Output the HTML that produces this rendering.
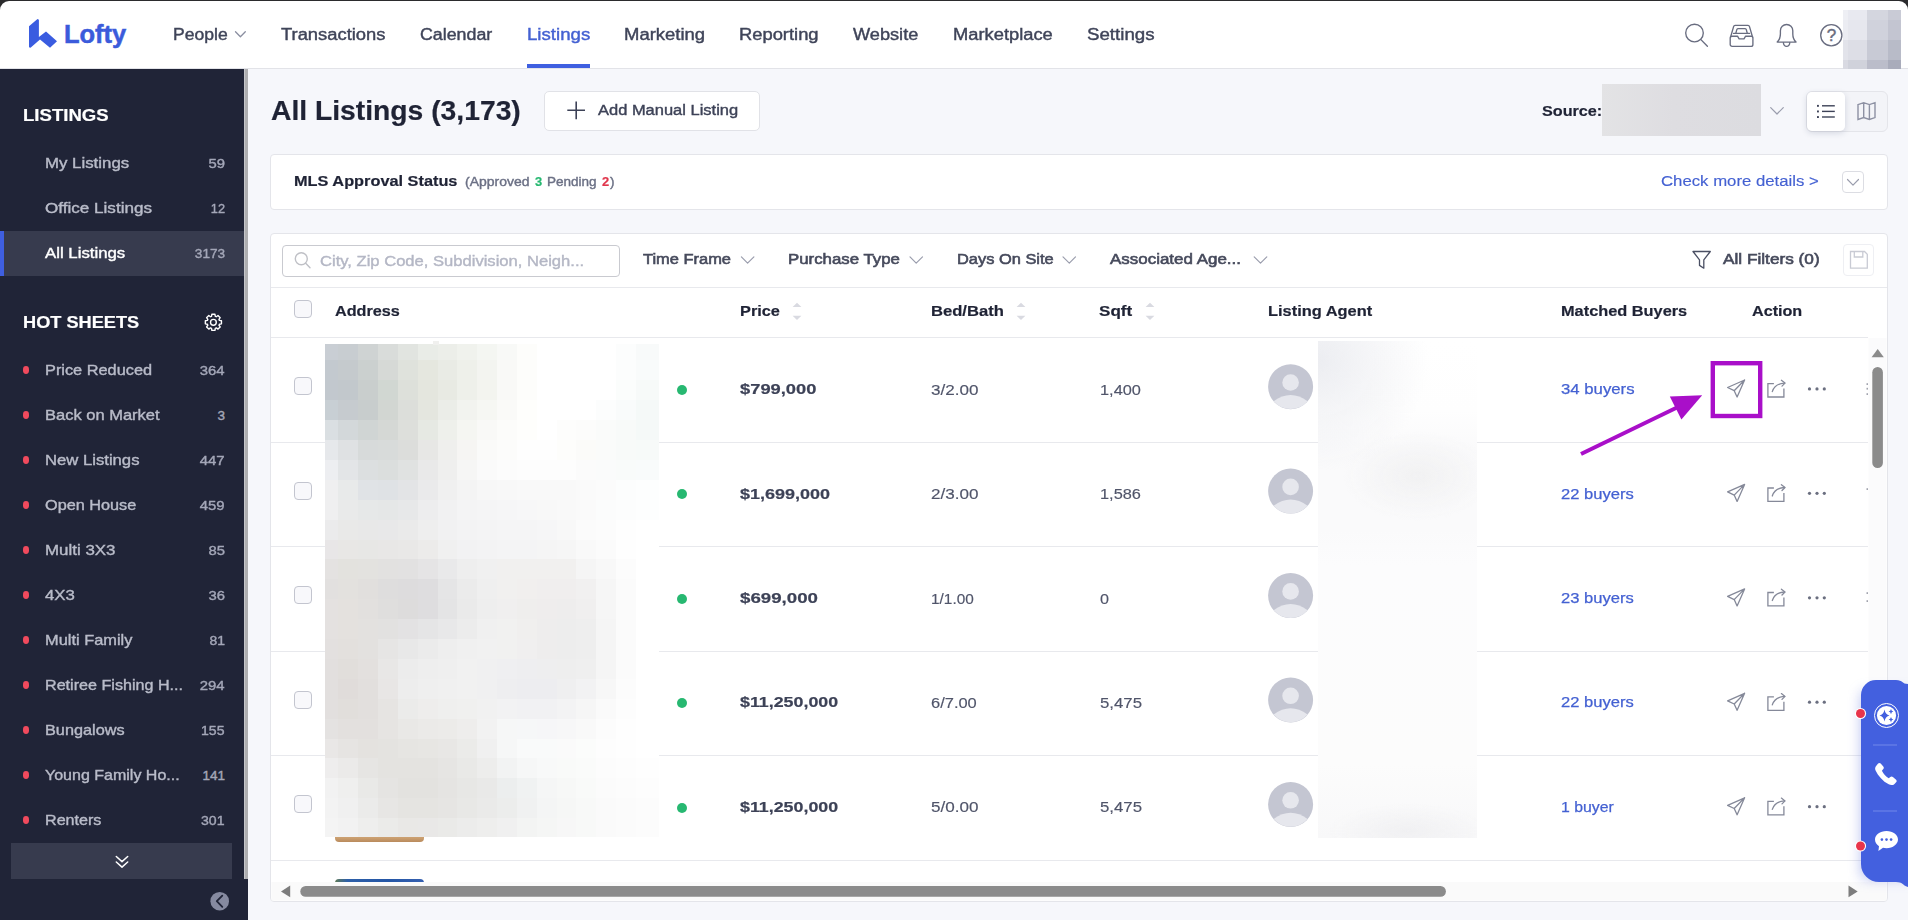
<!DOCTYPE html>
<html lang="en"><head><meta charset="utf-8"><title>Lofty - All Listings</title>
<style>
*{box-sizing:border-box}
html,body{margin:0;padding:0}
body{width:1908px;height:920px;overflow:hidden;position:relative;background:#f6f7fb;font-family:"Liberation Sans",sans-serif}
.a{position:absolute}
.t{position:absolute;white-space:pre;line-height:24px;height:24px;transform-origin:0 50%}
svg{position:absolute;overflow:visible}
.cb{position:absolute;width:18px;height:18px;border:1px solid #c3c5cf;border-radius:4px;background:#f8f8fb;left:294px}
.hl{position:absolute;left:271px;width:1597px;height:1px;background:#e8e9ed}
.dot{position:absolute;width:6.5px;height:7.5px;border-radius:50%;background:#f04a5d;left:22.8px}
.gd{position:absolute;width:10px;height:10px;border-radius:50%;background:#27b871;left:677px}
</style></head><body>
<!-- window frame -->
<div class="a" style="left:0;top:0;width:1908px;height:12px;background:#2b2b2d"></div>
<div class="a" style="left:0;top:1px;width:1908px;height:68px;background:#fff;border-radius:9px 9px 0 0;border-bottom:1px solid #e2e3e8"></div>
<!-- sidebar -->
<div class="a" style="left:0;top:69px;width:248px;height:851px;background:#202437"></div>
<div class="a" style="left:244px;top:69px;width:4px;height:810px;background:#aeaeb0;border-left:1px solid #c4c5c9"></div>
<div class="a" style="left:0;top:231px;width:244px;height:45px;background:#373b4e;border-left:4.5px solid #3f5fe0"></div>
<div class="a" style="left:11px;top:843px;width:221px;height:36px;background:#373b4e"></div>
<div class="dot" style="top:366px"></div>
<div class="dot" style="top:411px"></div>
<div class="dot" style="top:456px"></div>
<div class="dot" style="top:501px"></div>
<div class="dot" style="top:546px"></div>
<div class="dot" style="top:591px"></div>
<div class="dot" style="top:636px"></div>
<div class="dot" style="top:681px"></div>
<div class="dot" style="top:726px"></div>
<div class="dot" style="top:771px"></div>
<div class="dot" style="top:816px"></div>
<svg style="left:0;top:0" width="250" height="920" fill="none" stroke-linecap="round" stroke-linejoin="round">
<polygon points="219.41,320.41 221.45,320.75 221.45,323.85 219.41,324.19 218.98,325.22 220.19,326.90 218.00,329.09 216.32,327.88 215.29,328.31 214.95,330.35 211.85,330.35 211.51,328.31 210.48,327.88 208.80,329.09 206.61,326.90 207.82,325.22 207.39,324.19 205.35,323.85 205.35,320.75 207.39,320.41 207.82,319.38 206.61,317.70 208.80,315.51 210.48,316.72 211.51,316.29 211.85,314.25 214.95,314.25 215.29,316.29 216.32,316.72 218.00,315.51 220.19,317.70 218.98,319.38" stroke="#fff" stroke-width="1.4"/>
<circle cx="213.4" cy="322.3" r="2.9" stroke="#fff" stroke-width="1.4"/>
<polyline points="116.3,856.5 122,861.6 127.7,856.5" stroke="#fff" stroke-width="1.5"/>
<polyline points="116.3,862 122,867.1 127.7,862" stroke="#fff" stroke-width="1.5"/>
<circle cx="219.7" cy="901.2" r="9.3" fill="#868aa0"/>
<polyline points="222.3,895.6 216.8,901.2 222.3,906.8" stroke="#202437" stroke-width="1.8"/>
</svg>
<!-- logo -->
<svg style="left:0;top:0" width="70" height="60"><polygon fill="#3a5ce0" points="37.5,19 38.9,19.8 38.9,37 46,31.5 57,41.25 50,47.75 40,39.5 30.5,47.75 29,47.3 29,26.25"/></svg>
<!-- nav underline -->
<div class="a" style="left:526.5px;top:64px;width:63.5px;height:4px;background:#3f5fe0"></div>
<svg style="left:0;top:0" width="1908" height="70" fill="none" stroke="#696d80" stroke-width="1.35" stroke-linecap="round" stroke-linejoin="round">
<polyline points="235.5,31.8 240.4,36.7 245.3,31.8" stroke="#8a8ea0" stroke-width="1.3"/>
<circle cx="1694.5" cy="33" r="8.8"/><line x1="1700.9" y1="39.6" x2="1707.4" y2="46.3"/>
<path d="M1731.7,36.2h5.8l1.6,2.6h4.9l1.6,-2.6h5.8a1.5,1.5 0 0 1 1.5,1.5v6.8a1.9,1.9 0 0 1 -1.9,1.9h-18.9a1.9,1.9 0 0 1 -1.9,-1.9v-6.8a1.5,1.5 0 0 1 1.5,-1.5z"/>
<path d="M1730.6,37 L1733.6,26.6 a1.6,1.6 0 0 1 1.5,-1.2 h12.9 a1.6,1.6 0 0 1 1.5,1.2 L1752.5,37"/>
<path d="M1735.8,33.4 L1736.8,29.6 a1.3,1.3 0 0 1 1.2,-1 h7.1 a1.3,1.3 0 0 1 1.2,1 L1747.3,33.4"/>
<line x1="1733.6" y1="33.4" x2="1749.5" y2="33.4"/>
<path d="M1777.2,42.1 c2.4,-2.4 3.2,-4.6 3.2,-8.2 v-3.2 a6.2,6.2 0 0 1 12.4,0 v3.2 c0,3.6 0.8,5.8 3.2,8.2 z"/>
<path d="M1783.4,42.6 a3.2,3.8 0 0 0 6.4,0"/>
<circle cx="1831.3" cy="35.2" r="10.6"/>
</svg>
<span class="t" style="left:1826.5px;top:23.6px;font-size:17px;color:#696d80;width:10px;text-align:center;-webkit-text-stroke:.45px #696d80">?</span>
<div class="a" style="left:1843px;top:10px;width:5px;height:10px;background:#eeeff4"></div>
<div class="a" style="left:1843px;top:20px;width:5px;height:20px;background:#ebecf2"></div>
<div class="a" style="left:1843px;top:40px;width:5px;height:19.5px;background:#e2e3ea"></div>
<div class="a" style="left:1843px;top:59.5px;width:5px;height:9.799999999999997px;background:#d9dae2"></div>
<div class="a" style="left:1848px;top:10px;width:19px;height:10px;background:#e8e9f0"></div>
<div class="a" style="left:1848px;top:20px;width:19px;height:20px;background:#e6e7ee"></div>
<div class="a" style="left:1848px;top:40px;width:19px;height:19.5px;background:#dddee6"></div>
<div class="a" style="left:1848px;top:59.5px;width:19px;height:9.799999999999997px;background:#d0d2db"></div>
<div class="a" style="left:1867px;top:10px;width:21px;height:10px;background:#d4d6df"></div>
<div class="a" style="left:1867px;top:20px;width:21px;height:20px;background:#d0d2dc"></div>
<div class="a" style="left:1867px;top:40px;width:21px;height:19.5px;background:#c8cad5"></div>
<div class="a" style="left:1867px;top:59.5px;width:21px;height:9.799999999999997px;background:#bbbdca"></div>
<div class="a" style="left:1888px;top:10px;width:13px;height:10px;background:#c9cbd6"></div>
<div class="a" style="left:1888px;top:20px;width:13px;height:20px;background:#c3c5d1"></div>
<div class="a" style="left:1888px;top:40px;width:13px;height:19.5px;background:#b8bbc8"></div>
<div class="a" style="left:1888px;top:59.5px;width:13px;height:9.799999999999997px;background:#a9acbb"></div>
<!-- main -->
<div class="a" style="left:544.3px;top:91.2px;width:216.2px;height:40.3px;background:#fff;border:1px solid #e1e2e7;border-radius:5px"></div>
<div class="a" style="left:1601.5px;top:84px;width:159.5px;height:52px;background:linear-gradient(90deg,#e3e3e5,#dedde1 45%,#dcdce0)"></div>
<div class="a" style="left:1806px;top:91px;width:82px;height:40.5px;border:1px solid #e4e5ea;border-radius:6px;background:#f3f4f8"></div>
<div class="a" style="left:1807px;top:92px;width:38px;height:38.5px;border-radius:5px;background:#fff;box-shadow:0 2px 6px rgba(40,50,90,.16)"></div>
<!-- MLS panel -->
<div class="a" style="left:270px;top:154px;width:1617.5px;height:55.5px;background:#fff;border:1px solid #e4e5ea;border-radius:4px"></div>
<div class="a" style="left:1842px;top:171px;width:22px;height:22px;border:1px solid #dcdde3;border-radius:4px;background:#fff"></div>
<!-- table panel -->
<div class="a" style="left:270px;top:233px;width:1617.5px;height:668.5px;background:#fff;border:1px solid #e4e5ea;border-radius:4px"></div>
<div class="a" style="left:282px;top:245px;width:338px;height:31.5px;border:1px solid #c9cad0;border-radius:4px;background:#fff"></div>
<div class="a" style="left:1843px;top:244px;width:31px;height:31.5px;border:1px solid #eeeff3;border-radius:4px;background:#fff"></div>
<div class="hl" style="top:287px;width:1616px"></div>
<div class="hl" style="top:337px"></div>
<div class="hl" style="top:442px"></div>
<div class="hl" style="top:546px"></div>
<div class="hl" style="top:651px"></div>
<div class="hl" style="top:755px"></div>
<div class="hl" style="top:860px"></div>
<!-- checkboxes -->
<div class="cb" style="top:300px"></div>
<div class="cb" style="top:377px"></div>
<div class="cb" style="top:481.5px"></div>
<div class="cb" style="top:586px"></div>
<div class="cb" style="top:690.5px"></div>
<div class="cb" style="top:794.5px"></div>
<!-- green dots -->
<div class="gd" style="top:384.5px"></div>
<div class="gd" style="top:489px"></div>
<div class="gd" style="top:593.5px"></div>
<div class="gd" style="top:698px"></div>
<div class="gd" style="top:802.5px"></div>
<div class="a" style="left:334.5px;top:830px;width:89px;height:11.6px;border-radius:0 0 4px 4px;background:linear-gradient(180deg,#d9b58d,#c99d6e 70%,#b98a5c)"></div>
<div class="a" style="left:334.5px;top:879px;width:89px;height:6px;border-radius:4px 4px 0 0;background:linear-gradient(90deg,#5f7a55 0,#2d5fa8 14%,#2456a6 60%,#3560b0)"></div>
<svg style="left:0;top:0" width="1908" height="920" shape-rendering="crispEdges">
<rect x="325.3" y="344.0" width="13.2" height="16.7" fill="#c9ced4"/>
<rect x="338.2" y="344.0" width="20.2" height="16.7" fill="#c8cdd1"/>
<rect x="358.1" y="344.0" width="20.2" height="16.7" fill="#cfd3d3"/>
<rect x="377.9" y="344.0" width="20.2" height="16.7" fill="#d9dcda"/>
<rect x="397.8" y="344.0" width="20.2" height="16.7" fill="#e1e4e0"/>
<rect x="417.6" y="344.0" width="20.2" height="16.7" fill="#e9ece7"/>
<rect x="437.5" y="344.0" width="20.2" height="16.7" fill="#eceee9"/>
<rect x="457.3" y="344.0" width="20.2" height="16.7" fill="#f0f2ed"/>
<rect x="477.2" y="344.0" width="20.2" height="16.7" fill="#f4f6f2"/>
<rect x="497.0" y="344.0" width="20.1" height="16.7" fill="#f8f9f7"/>
<rect x="516.9" y="344.0" width="20.2" height="16.7" fill="#fdfdfb"/>
<rect x="536.7" y="344.0" width="79.7" height="16.7" fill="#ffffff"/>
<rect x="616.1" y="344.0" width="20.2" height="16.7" fill="#fcfdfd"/>
<rect x="636.0" y="344.0" width="23.4" height="16.7" fill="#f8fafa"/>
<rect x="325.3" y="360.4" width="13.2" height="20.2" fill="#c3c9cf"/>
<rect x="338.2" y="360.4" width="20.2" height="20.2" fill="#c5cacd"/>
<rect x="358.1" y="360.4" width="20.2" height="20.2" fill="#cbd0cf"/>
<rect x="377.9" y="360.4" width="20.2" height="20.2" fill="#d6d9d6"/>
<rect x="397.8" y="360.4" width="20.2" height="20.2" fill="#dfe2dc"/>
<rect x="417.6" y="360.4" width="20.2" height="20.2" fill="#e5e7df"/>
<rect x="437.5" y="360.4" width="20.2" height="20.2" fill="#e9ebe5"/>
<rect x="457.3" y="360.4" width="20.2" height="20.2" fill="#eef0ea"/>
<rect x="477.2" y="360.4" width="20.2" height="20.2" fill="#f3f4f0"/>
<rect x="497.0" y="360.4" width="20.1" height="20.2" fill="#f9f9f7"/>
<rect x="516.9" y="360.4" width="20.2" height="20.2" fill="#fdfdfb"/>
<rect x="536.7" y="360.4" width="79.7" height="20.2" fill="#ffffff"/>
<rect x="616.1" y="360.4" width="20.2" height="20.2" fill="#fcfdfd"/>
<rect x="636.0" y="360.4" width="23.4" height="20.2" fill="#f9fbfb"/>
<rect x="325.3" y="380.3" width="13.2" height="20.2" fill="#c2c8ce"/>
<rect x="338.2" y="380.3" width="20.2" height="20.2" fill="#c2c8cc"/>
<rect x="358.1" y="380.3" width="20.2" height="20.2" fill="#c9cecd"/>
<rect x="377.9" y="380.3" width="20.2" height="20.2" fill="#d1d7d2"/>
<rect x="397.8" y="380.3" width="20.2" height="20.2" fill="#dde0da"/>
<rect x="417.6" y="380.3" width="20.2" height="20.2" fill="#e4e6de"/>
<rect x="437.5" y="380.3" width="20.2" height="20.2" fill="#e8eae3"/>
<rect x="457.3" y="380.3" width="20.2" height="20.2" fill="#eef0ea"/>
<rect x="477.2" y="380.3" width="20.2" height="20.2" fill="#f3f4ef"/>
<rect x="497.0" y="380.3" width="20.1" height="20.2" fill="#f9f9f7"/>
<rect x="516.9" y="380.3" width="20.2" height="20.2" fill="#fdfdfb"/>
<rect x="536.7" y="380.3" width="79.7" height="20.2" fill="#ffffff"/>
<rect x="616.1" y="380.3" width="20.2" height="20.2" fill="#fbfdfc"/>
<rect x="636.0" y="380.3" width="23.4" height="20.2" fill="#f7faf9"/>
<rect x="325.3" y="400.2" width="13.2" height="20.2" fill="#c8cfd4"/>
<rect x="338.2" y="400.2" width="20.2" height="20.2" fill="#c6cbcf"/>
<rect x="358.1" y="400.2" width="20.2" height="20.2" fill="#c8cdcd"/>
<rect x="377.9" y="400.2" width="20.2" height="20.2" fill="#d2d6d2"/>
<rect x="397.8" y="400.2" width="20.2" height="20.2" fill="#dcdeda"/>
<rect x="417.6" y="400.2" width="20.2" height="20.2" fill="#e4e6df"/>
<rect x="437.5" y="400.2" width="20.2" height="20.2" fill="#ebede8"/>
<rect x="457.3" y="400.2" width="20.2" height="20.2" fill="#f2f3ef"/>
<rect x="477.2" y="400.2" width="20.2" height="20.2" fill="#f6f7f3"/>
<rect x="497.0" y="400.2" width="20.1" height="20.2" fill="#fafaf8"/>
<rect x="516.9" y="400.2" width="20.2" height="20.2" fill="#fefefc"/>
<rect x="536.7" y="400.2" width="59.9" height="20.2" fill="#ffffff"/>
<rect x="596.3" y="400.2" width="20.2" height="20.2" fill="#fcfdfd"/>
<rect x="616.1" y="400.2" width="20.2" height="20.2" fill="#f9fbfb"/>
<rect x="636.0" y="400.2" width="23.4" height="20.2" fill="#f5f9f8"/>
<rect x="325.3" y="420.1" width="13.2" height="20.2" fill="#dadfe2"/>
<rect x="338.2" y="420.1" width="20.2" height="20.2" fill="#d3d8da"/>
<rect x="358.1" y="420.1" width="20.2" height="20.2" fill="#d0d5d4"/>
<rect x="377.9" y="420.1" width="20.2" height="20.2" fill="#d5d8d5"/>
<rect x="397.8" y="420.1" width="20.2" height="20.2" fill="#dddfdb"/>
<rect x="417.6" y="420.1" width="20.2" height="20.2" fill="#e6e9e3"/>
<rect x="437.5" y="420.1" width="20.2" height="20.2" fill="#eef0eb"/>
<rect x="457.3" y="420.1" width="20.2" height="20.2" fill="#f5f6f2"/>
<rect x="477.2" y="420.1" width="20.2" height="20.2" fill="#f9f9f7"/>
<rect x="497.0" y="420.1" width="20.1" height="20.2" fill="#fcfcfa"/>
<rect x="516.9" y="420.1" width="20.2" height="20.2" fill="#fefefc"/>
<rect x="536.7" y="420.1" width="20.2" height="20.2" fill="#ffffff"/>
<rect x="556.6" y="420.1" width="20.2" height="20.2" fill="#fdfdfc"/>
<rect x="576.4" y="420.1" width="20.2" height="20.2" fill="#fcfcfb"/>
<rect x="596.3" y="420.1" width="20.2" height="20.2" fill="#fafbfa"/>
<rect x="616.1" y="420.1" width="20.2" height="20.2" fill="#f8faf9"/>
<rect x="636.0" y="420.1" width="23.4" height="20.2" fill="#f5f9f8"/>
<rect x="325.3" y="440.0" width="13.2" height="20.2" fill="#e6e8eb"/>
<rect x="338.2" y="440.0" width="20.2" height="20.2" fill="#dfe1e3"/>
<rect x="358.1" y="440.0" width="20.2" height="20.2" fill="#d7dada"/>
<rect x="377.9" y="440.0" width="20.2" height="20.2" fill="#d8dbda"/>
<rect x="397.8" y="440.0" width="20.2" height="20.2" fill="#dcdddb"/>
<rect x="417.6" y="440.0" width="20.2" height="20.2" fill="#e7e7e5"/>
<rect x="437.5" y="440.0" width="20.2" height="20.2" fill="#efefed"/>
<rect x="457.3" y="440.0" width="20.2" height="20.2" fill="#f6f5f3"/>
<rect x="477.2" y="440.0" width="20.2" height="20.2" fill="#fafaf9"/>
<rect x="497.0" y="440.0" width="20.1" height="20.2" fill="#fcfcfb"/>
<rect x="516.9" y="440.0" width="40.0" height="20.2" fill="#fefefe"/>
<rect x="556.6" y="440.0" width="20.2" height="20.2" fill="#fdfdfb"/>
<rect x="576.4" y="440.0" width="20.2" height="20.2" fill="#fbfbf9"/>
<rect x="596.3" y="440.0" width="20.2" height="20.2" fill="#fafbfa"/>
<rect x="616.1" y="440.0" width="20.2" height="20.2" fill="#f8faf9"/>
<rect x="636.0" y="440.0" width="23.4" height="20.2" fill="#f7faf9"/>
<rect x="325.3" y="459.9" width="13.2" height="20.2" fill="#edeef1"/>
<rect x="338.2" y="459.9" width="20.2" height="20.2" fill="#e3e5e7"/>
<rect x="358.1" y="459.9" width="20.2" height="20.2" fill="#dcdfe0"/>
<rect x="377.9" y="459.9" width="20.2" height="20.2" fill="#dbdedd"/>
<rect x="397.8" y="459.9" width="20.2" height="20.2" fill="#e0e2e1"/>
<rect x="417.6" y="459.9" width="20.2" height="20.2" fill="#e9e9e9"/>
<rect x="437.5" y="459.9" width="20.2" height="20.2" fill="#efefee"/>
<rect x="457.3" y="459.9" width="20.2" height="20.2" fill="#f6f6f5"/>
<rect x="477.2" y="459.9" width="20.2" height="20.2" fill="#fafafa"/>
<rect x="497.0" y="459.9" width="20.1" height="20.2" fill="#fcfcfc"/>
<rect x="516.9" y="459.9" width="59.9" height="20.2" fill="#fdfdfd"/>
<rect x="576.4" y="459.9" width="20.2" height="20.2" fill="#fbfbfb"/>
<rect x="596.3" y="459.9" width="20.2" height="20.2" fill="#fafbfb"/>
<rect x="616.1" y="459.9" width="20.2" height="20.2" fill="#f9fbfa"/>
<rect x="636.0" y="459.9" width="23.4" height="20.2" fill="#f9fbfb"/>
<rect x="325.3" y="479.8" width="13.2" height="20.2" fill="#efeff0"/>
<rect x="338.2" y="479.8" width="20.2" height="20.2" fill="#e8eaea"/>
<rect x="358.1" y="479.8" width="20.2" height="20.2" fill="#e0e3e6"/>
<rect x="377.9" y="479.8" width="20.2" height="20.2" fill="#dfe2e5"/>
<rect x="397.8" y="479.8" width="20.2" height="20.2" fill="#e3e4e6"/>
<rect x="417.6" y="479.8" width="20.2" height="20.2" fill="#eaeaeb"/>
<rect x="437.5" y="479.8" width="20.2" height="20.2" fill="#f0f0f0"/>
<rect x="457.3" y="479.8" width="20.2" height="20.2" fill="#f4f4f4"/>
<rect x="477.2" y="479.8" width="20.2" height="20.2" fill="#f7f7f7"/>
<rect x="497.0" y="479.8" width="20.1" height="20.2" fill="#f8f8f8"/>
<rect x="516.9" y="479.8" width="59.9" height="20.2" fill="#f9f9f9"/>
<rect x="576.4" y="479.8" width="20.2" height="20.2" fill="#fafafa"/>
<rect x="596.3" y="479.8" width="20.2" height="20.2" fill="#fbfbfb"/>
<rect x="616.1" y="479.8" width="20.2" height="20.2" fill="#fcfdfd"/>
<rect x="636.0" y="479.8" width="23.4" height="20.2" fill="#fdfefe"/>
<rect x="325.3" y="499.7" width="13.2" height="20.2" fill="#efeff0"/>
<rect x="338.2" y="499.7" width="20.2" height="20.2" fill="#e9eaea"/>
<rect x="358.1" y="499.7" width="20.2" height="20.2" fill="#e6e8e8"/>
<rect x="377.9" y="499.7" width="20.2" height="20.2" fill="#e5e7e7"/>
<rect x="397.8" y="499.7" width="20.2" height="20.2" fill="#e7e8e9"/>
<rect x="417.6" y="499.7" width="20.2" height="20.2" fill="#ededee"/>
<rect x="437.5" y="499.7" width="20.2" height="20.2" fill="#f1f1f2"/>
<rect x="457.3" y="499.7" width="20.2" height="20.2" fill="#f4f4f5"/>
<rect x="477.2" y="499.7" width="20.2" height="20.2" fill="#f5f5f6"/>
<rect x="497.0" y="499.7" width="20.1" height="20.2" fill="#f6f6f7"/>
<rect x="516.9" y="499.7" width="20.2" height="20.2" fill="#f7f7f8"/>
<rect x="536.7" y="499.7" width="20.2" height="20.2" fill="#f8f8f8"/>
<rect x="556.6" y="499.7" width="20.2" height="20.2" fill="#f9f9f9"/>
<rect x="576.4" y="499.7" width="20.2" height="20.2" fill="#fafafa"/>
<rect x="596.3" y="499.7" width="20.2" height="20.2" fill="#fbfcfc"/>
<rect x="616.1" y="499.7" width="20.2" height="20.2" fill="#fcfdfd"/>
<rect x="636.0" y="499.7" width="23.4" height="20.2" fill="#fdfefe"/>
<rect x="325.3" y="519.6" width="13.2" height="20.2" fill="#ebebec"/>
<rect x="338.2" y="519.6" width="20.2" height="20.2" fill="#e9e9e8"/>
<rect x="358.1" y="519.6" width="20.2" height="20.2" fill="#e8e8e8"/>
<rect x="377.9" y="519.6" width="20.2" height="20.2" fill="#e8e8e9"/>
<rect x="397.8" y="519.6" width="20.2" height="20.2" fill="#eaeaea"/>
<rect x="417.6" y="519.6" width="20.2" height="20.2" fill="#eeeeee"/>
<rect x="437.5" y="519.6" width="20.2" height="20.2" fill="#f1f1f2"/>
<rect x="457.3" y="519.6" width="20.2" height="20.2" fill="#f3f3f4"/>
<rect x="477.2" y="519.6" width="20.2" height="20.2" fill="#f4f4f5"/>
<rect x="497.0" y="519.6" width="40.0" height="20.2" fill="#f5f5f6"/>
<rect x="536.7" y="519.6" width="20.2" height="20.2" fill="#f6f6f7"/>
<rect x="556.6" y="519.6" width="20.2" height="20.2" fill="#f8f8f8"/>
<rect x="576.4" y="519.6" width="20.2" height="20.2" fill="#fbfbfb"/>
<rect x="596.3" y="519.6" width="20.2" height="20.2" fill="#fcfcfc"/>
<rect x="616.1" y="519.6" width="20.2" height="20.2" fill="#fefefe"/>
<rect x="636.0" y="519.6" width="23.4" height="20.2" fill="#ffffff"/>
<rect x="325.3" y="539.5" width="13.2" height="20.2" fill="#e8e6e7"/>
<rect x="338.2" y="539.5" width="20.2" height="20.2" fill="#e8e7e5"/>
<rect x="358.1" y="539.5" width="20.2" height="20.2" fill="#e7e7e5"/>
<rect x="377.9" y="539.5" width="20.2" height="20.2" fill="#e8e7e6"/>
<rect x="397.8" y="539.5" width="20.2" height="20.2" fill="#e9e8e7"/>
<rect x="417.6" y="539.5" width="20.2" height="20.2" fill="#ecebea"/>
<rect x="437.5" y="539.5" width="20.2" height="20.2" fill="#f0f0f0"/>
<rect x="457.3" y="539.5" width="20.2" height="20.2" fill="#f2f2f3"/>
<rect x="477.2" y="539.5" width="20.2" height="20.2" fill="#f3f3f4"/>
<rect x="497.0" y="539.5" width="40.0" height="20.2" fill="#f4f4f5"/>
<rect x="536.7" y="539.5" width="20.2" height="20.2" fill="#f5f5f5"/>
<rect x="556.6" y="539.5" width="20.2" height="20.2" fill="#f6f6f6"/>
<rect x="576.4" y="539.5" width="20.2" height="20.2" fill="#f9f9f9"/>
<rect x="596.3" y="539.5" width="20.2" height="20.2" fill="#fbfbfb"/>
<rect x="616.1" y="539.5" width="20.2" height="20.2" fill="#fefefe"/>
<rect x="636.0" y="539.5" width="23.4" height="20.2" fill="#ffffff"/>
<rect x="325.3" y="559.4" width="13.2" height="20.2" fill="#e4e2e1"/>
<rect x="338.2" y="559.4" width="20.2" height="20.2" fill="#e3e2de"/>
<rect x="358.1" y="559.4" width="20.2" height="20.2" fill="#e3e2df"/>
<rect x="377.9" y="559.4" width="20.2" height="20.2" fill="#e2e1e0"/>
<rect x="397.8" y="559.4" width="20.2" height="20.2" fill="#e2e1e1"/>
<rect x="417.6" y="559.4" width="20.2" height="20.2" fill="#e5e4e5"/>
<rect x="437.5" y="559.4" width="20.2" height="20.2" fill="#e9e9ea"/>
<rect x="457.3" y="559.4" width="20.2" height="20.2" fill="#eeeeee"/>
<rect x="477.2" y="559.4" width="20.2" height="20.2" fill="#f0f0f0"/>
<rect x="497.0" y="559.4" width="79.7" height="20.2" fill="#f1f0ef"/>
<rect x="576.4" y="559.4" width="20.2" height="20.2" fill="#f5f5f5"/>
<rect x="596.3" y="559.4" width="20.2" height="20.2" fill="#f8f8f8"/>
<rect x="616.1" y="559.4" width="20.2" height="20.2" fill="#fcfcfc"/>
<rect x="636.0" y="559.4" width="23.4" height="20.2" fill="#ffffff"/>
<rect x="325.3" y="579.3" width="13.2" height="20.2" fill="#e2e0df"/>
<rect x="338.2" y="579.3" width="20.2" height="20.2" fill="#e3e1de"/>
<rect x="358.1" y="579.3" width="20.2" height="20.2" fill="#e1dfdd"/>
<rect x="377.9" y="579.3" width="20.2" height="20.2" fill="#dedddd"/>
<rect x="397.8" y="579.3" width="20.2" height="20.2" fill="#dddcdd"/>
<rect x="417.6" y="579.3" width="20.2" height="20.2" fill="#dedddf"/>
<rect x="437.5" y="579.3" width="20.2" height="20.2" fill="#e5e5e6"/>
<rect x="457.3" y="579.3" width="20.2" height="20.2" fill="#ebebeb"/>
<rect x="477.2" y="579.3" width="20.2" height="20.2" fill="#efefef"/>
<rect x="497.0" y="579.3" width="20.1" height="20.2" fill="#f1f0ef"/>
<rect x="516.9" y="579.3" width="20.2" height="20.2" fill="#f1efee"/>
<rect x="536.7" y="579.3" width="40.0" height="20.2" fill="#f0eeee"/>
<rect x="576.4" y="579.3" width="20.2" height="20.2" fill="#f1f0f0"/>
<rect x="596.3" y="579.3" width="20.2" height="20.2" fill="#f6f6f6"/>
<rect x="616.1" y="579.3" width="20.2" height="20.2" fill="#fbfbfb"/>
<rect x="636.0" y="579.3" width="23.4" height="20.2" fill="#ffffff"/>
<rect x="325.3" y="599.2" width="13.2" height="20.2" fill="#e4e1e0"/>
<rect x="338.2" y="599.2" width="20.2" height="20.2" fill="#e4e1de"/>
<rect x="358.1" y="599.2" width="20.2" height="20.2" fill="#e2e0de"/>
<rect x="377.9" y="599.2" width="20.2" height="20.2" fill="#dfdedd"/>
<rect x="397.8" y="599.2" width="20.2" height="20.2" fill="#dddcdc"/>
<rect x="417.6" y="599.2" width="20.2" height="20.2" fill="#dedddf"/>
<rect x="437.5" y="599.2" width="20.2" height="20.2" fill="#e4e4e5"/>
<rect x="457.3" y="599.2" width="20.2" height="20.2" fill="#eaeaea"/>
<rect x="477.2" y="599.2" width="20.2" height="20.2" fill="#eeeeee"/>
<rect x="497.0" y="599.2" width="20.1" height="20.2" fill="#f0efef"/>
<rect x="516.9" y="599.2" width="20.2" height="20.2" fill="#efeeed"/>
<rect x="536.7" y="599.2" width="20.2" height="20.2" fill="#efeded"/>
<rect x="556.6" y="599.2" width="20.2" height="20.2" fill="#eeeded"/>
<rect x="576.4" y="599.2" width="20.2" height="20.2" fill="#f0efef"/>
<rect x="596.3" y="599.2" width="20.2" height="20.2" fill="#f6f6f6"/>
<rect x="616.1" y="599.2" width="20.2" height="20.2" fill="#fbfbfb"/>
<rect x="636.0" y="599.2" width="23.4" height="20.2" fill="#ffffff"/>
<rect x="325.3" y="619.1" width="13.2" height="20.2" fill="#e4e1e0"/>
<rect x="338.2" y="619.1" width="20.2" height="20.2" fill="#e4e1de"/>
<rect x="358.1" y="619.1" width="20.2" height="20.2" fill="#e3e1df"/>
<rect x="377.9" y="619.1" width="20.2" height="20.2" fill="#e2e1e0"/>
<rect x="397.8" y="619.1" width="20.2" height="20.2" fill="#e3e2e3"/>
<rect x="417.6" y="619.1" width="20.2" height="20.2" fill="#e5e5e6"/>
<rect x="437.5" y="619.1" width="20.2" height="20.2" fill="#e8e8e9"/>
<rect x="457.3" y="619.1" width="20.2" height="20.2" fill="#ececec"/>
<rect x="477.2" y="619.1" width="20.2" height="20.2" fill="#f0f0f0"/>
<rect x="497.0" y="619.1" width="20.1" height="20.2" fill="#f1f1f0"/>
<rect x="516.9" y="619.1" width="20.2" height="20.2" fill="#f0efee"/>
<rect x="536.7" y="619.1" width="20.2" height="20.2" fill="#eeeded"/>
<rect x="556.6" y="619.1" width="20.2" height="20.2" fill="#ededed"/>
<rect x="576.4" y="619.1" width="20.2" height="20.2" fill="#eeeeee"/>
<rect x="596.3" y="619.1" width="20.2" height="20.2" fill="#f5f5f5"/>
<rect x="616.1" y="619.1" width="20.2" height="20.2" fill="#fbfbfb"/>
<rect x="636.0" y="619.1" width="23.4" height="20.2" fill="#ffffff"/>
<rect x="325.3" y="639.0" width="13.2" height="20.2" fill="#e3e0df"/>
<rect x="338.2" y="639.0" width="20.2" height="20.2" fill="#e3e0dd"/>
<rect x="358.1" y="639.0" width="20.2" height="20.2" fill="#e3e1df"/>
<rect x="377.9" y="639.0" width="20.2" height="20.2" fill="#e6e5e4"/>
<rect x="397.8" y="639.0" width="20.2" height="20.2" fill="#e8e8e8"/>
<rect x="417.6" y="639.0" width="20.2" height="20.2" fill="#ebebeb"/>
<rect x="437.5" y="639.0" width="20.2" height="20.2" fill="#eeeeee"/>
<rect x="457.3" y="639.0" width="20.2" height="20.2" fill="#f0f0f0"/>
<rect x="477.2" y="639.0" width="20.2" height="20.2" fill="#f1f1f1"/>
<rect x="497.0" y="639.0" width="20.1" height="20.2" fill="#f1f1f0"/>
<rect x="516.9" y="639.0" width="20.2" height="20.2" fill="#f0efef"/>
<rect x="536.7" y="639.0" width="20.2" height="20.2" fill="#eeeded"/>
<rect x="556.6" y="639.0" width="20.2" height="20.2" fill="#ededed"/>
<rect x="576.4" y="639.0" width="20.2" height="20.2" fill="#eeeeee"/>
<rect x="596.3" y="639.0" width="20.2" height="20.2" fill="#f5f5f5"/>
<rect x="616.1" y="639.0" width="20.2" height="20.2" fill="#fbfbfb"/>
<rect x="636.0" y="639.0" width="23.4" height="20.2" fill="#ffffff"/>
<rect x="325.3" y="658.9" width="13.2" height="20.2" fill="#e2dfde"/>
<rect x="338.2" y="658.9" width="20.2" height="20.2" fill="#e1dedb"/>
<rect x="358.1" y="658.9" width="20.2" height="20.2" fill="#e3e0de"/>
<rect x="377.9" y="658.9" width="20.2" height="20.2" fill="#e8e7e6"/>
<rect x="397.8" y="658.9" width="20.2" height="20.2" fill="#ececec"/>
<rect x="417.6" y="658.9" width="20.2" height="20.2" fill="#eeeeee"/>
<rect x="437.5" y="658.9" width="20.2" height="20.2" fill="#efefef"/>
<rect x="457.3" y="658.9" width="20.2" height="20.2" fill="#f1f1f1"/>
<rect x="477.2" y="658.9" width="20.2" height="20.2" fill="#f0f0f1"/>
<rect x="497.0" y="658.9" width="20.1" height="20.2" fill="#efeff1"/>
<rect x="516.9" y="658.9" width="20.2" height="20.2" fill="#eeeef0"/>
<rect x="536.7" y="658.9" width="20.2" height="20.2" fill="#eeeeef"/>
<rect x="556.6" y="658.9" width="20.2" height="20.2" fill="#eeeeee"/>
<rect x="576.4" y="658.9" width="20.2" height="20.2" fill="#efefef"/>
<rect x="596.3" y="658.9" width="20.2" height="20.2" fill="#f5f5f5"/>
<rect x="616.1" y="658.9" width="20.2" height="20.2" fill="#fbfbfb"/>
<rect x="636.0" y="658.9" width="23.4" height="20.2" fill="#ffffff"/>
<rect x="325.3" y="678.8" width="13.2" height="20.2" fill="#e2dfde"/>
<rect x="338.2" y="678.8" width="20.2" height="20.2" fill="#e0dcda"/>
<rect x="358.1" y="678.8" width="20.2" height="20.2" fill="#e2dfdd"/>
<rect x="377.9" y="678.8" width="20.2" height="20.2" fill="#e8e6e5"/>
<rect x="397.8" y="678.8" width="20.2" height="20.2" fill="#ededed"/>
<rect x="417.6" y="678.8" width="20.2" height="20.2" fill="#efefef"/>
<rect x="437.5" y="678.8" width="20.2" height="20.2" fill="#f0f0f0"/>
<rect x="457.3" y="678.8" width="20.2" height="20.2" fill="#f1f1f1"/>
<rect x="477.2" y="678.8" width="20.2" height="20.2" fill="#f0f0f1"/>
<rect x="497.0" y="678.8" width="20.1" height="20.2" fill="#eeeef0"/>
<rect x="516.9" y="678.8" width="40.0" height="20.2" fill="#ededf0"/>
<rect x="556.6" y="678.8" width="20.2" height="20.2" fill="#efeff0"/>
<rect x="576.4" y="678.8" width="20.2" height="20.2" fill="#f2f2f3"/>
<rect x="596.3" y="678.8" width="20.2" height="20.2" fill="#f7f7f7"/>
<rect x="616.1" y="678.8" width="20.2" height="20.2" fill="#fcfcfc"/>
<rect x="636.0" y="678.8" width="23.4" height="20.2" fill="#ffffff"/>
<rect x="325.3" y="698.7" width="13.2" height="20.2" fill="#e2dfde"/>
<rect x="338.2" y="698.7" width="20.2" height="20.2" fill="#e1dedb"/>
<rect x="358.1" y="698.7" width="20.2" height="20.2" fill="#e2dfdd"/>
<rect x="377.9" y="698.7" width="20.2" height="20.2" fill="#e6e4e2"/>
<rect x="397.8" y="698.7" width="20.2" height="20.2" fill="#ebebea"/>
<rect x="417.6" y="698.7" width="20.2" height="20.2" fill="#eeedec"/>
<rect x="437.5" y="698.7" width="20.2" height="20.2" fill="#efefee"/>
<rect x="457.3" y="698.7" width="20.2" height="20.2" fill="#f0f0ef"/>
<rect x="477.2" y="698.7" width="20.2" height="20.2" fill="#f1f1f1"/>
<rect x="497.0" y="698.7" width="20.1" height="20.2" fill="#f2f2f3"/>
<rect x="516.9" y="698.7" width="40.0" height="20.2" fill="#f1f1f3"/>
<rect x="556.6" y="698.7" width="20.2" height="20.2" fill="#f3f3f4"/>
<rect x="576.4" y="698.7" width="20.2" height="20.2" fill="#f6f6f6"/>
<rect x="596.3" y="698.7" width="20.2" height="20.2" fill="#fafafa"/>
<rect x="616.1" y="698.7" width="20.2" height="20.2" fill="#fdfdfd"/>
<rect x="636.0" y="698.7" width="23.4" height="20.2" fill="#ffffff"/>
<rect x="325.3" y="718.6" width="13.2" height="20.2" fill="#e4e2e1"/>
<rect x="338.2" y="718.6" width="40.0" height="20.2" fill="#e3e0de"/>
<rect x="377.9" y="718.6" width="20.2" height="20.2" fill="#e6e4e2"/>
<rect x="397.8" y="718.6" width="20.2" height="20.2" fill="#e9e8e6"/>
<rect x="417.6" y="718.6" width="20.2" height="20.2" fill="#ebeae8"/>
<rect x="437.5" y="718.6" width="20.2" height="20.2" fill="#ecebe9"/>
<rect x="457.3" y="718.6" width="20.2" height="20.2" fill="#eeedec"/>
<rect x="477.2" y="718.6" width="20.2" height="20.2" fill="#f2f2f2"/>
<rect x="497.0" y="718.6" width="20.1" height="20.2" fill="#f6f7f7"/>
<rect x="516.9" y="718.6" width="20.2" height="20.2" fill="#f6f7f8"/>
<rect x="536.7" y="718.6" width="20.2" height="20.2" fill="#f6f6f8"/>
<rect x="556.6" y="718.6" width="20.2" height="20.2" fill="#f7f7f8"/>
<rect x="576.4" y="718.6" width="20.2" height="20.2" fill="#f9f9f9"/>
<rect x="596.3" y="718.6" width="20.2" height="20.2" fill="#fcfcfc"/>
<rect x="616.1" y="718.6" width="20.2" height="20.2" fill="#fefefe"/>
<rect x="636.0" y="718.6" width="23.4" height="20.2" fill="#ffffff"/>
<rect x="325.3" y="738.5" width="13.2" height="20.2" fill="#e9e7e6"/>
<rect x="338.2" y="738.5" width="20.2" height="20.2" fill="#e6e4e2"/>
<rect x="358.1" y="738.5" width="20.2" height="20.2" fill="#e4e2df"/>
<rect x="377.9" y="738.5" width="20.2" height="20.2" fill="#e4e3e0"/>
<rect x="397.8" y="738.5" width="20.2" height="20.2" fill="#e6e5e2"/>
<rect x="417.6" y="738.5" width="20.2" height="20.2" fill="#e7e6e3"/>
<rect x="437.5" y="738.5" width="20.2" height="20.2" fill="#e8e7e5"/>
<rect x="457.3" y="738.5" width="20.2" height="20.2" fill="#ebebe9"/>
<rect x="477.2" y="738.5" width="20.2" height="20.2" fill="#f0f0f0"/>
<rect x="497.0" y="738.5" width="20.1" height="20.2" fill="#f6f7f7"/>
<rect x="516.9" y="738.5" width="40.0" height="20.2" fill="#f9fafa"/>
<rect x="556.6" y="738.5" width="20.2" height="20.2" fill="#fafafa"/>
<rect x="576.4" y="738.5" width="20.2" height="20.2" fill="#fbfcfb"/>
<rect x="596.3" y="738.5" width="20.2" height="20.2" fill="#fdfdfd"/>
<rect x="616.1" y="738.5" width="20.2" height="20.2" fill="#fefefe"/>
<rect x="636.0" y="738.5" width="23.4" height="20.2" fill="#ffffff"/>
<rect x="325.3" y="758.4" width="13.2" height="20.2" fill="#eeeded"/>
<rect x="338.2" y="758.4" width="20.2" height="20.2" fill="#ebeae9"/>
<rect x="358.1" y="758.4" width="20.2" height="20.2" fill="#e6e5e3"/>
<rect x="377.9" y="758.4" width="59.9" height="20.2" fill="#e4e3e0"/>
<rect x="437.5" y="758.4" width="20.2" height="20.2" fill="#e6e5e3"/>
<rect x="457.3" y="758.4" width="20.2" height="20.2" fill="#e9e9e7"/>
<rect x="477.2" y="758.4" width="20.2" height="20.2" fill="#ededec"/>
<rect x="497.0" y="758.4" width="20.1" height="20.2" fill="#f2f3f3"/>
<rect x="516.9" y="758.4" width="20.2" height="20.2" fill="#f6f7f7"/>
<rect x="536.7" y="758.4" width="20.2" height="20.2" fill="#f8f9f9"/>
<rect x="556.6" y="758.4" width="20.2" height="20.2" fill="#f9faf9"/>
<rect x="576.4" y="758.4" width="20.2" height="20.2" fill="#fafbfa"/>
<rect x="596.3" y="758.4" width="20.2" height="20.2" fill="#fcfcfc"/>
<rect x="616.1" y="758.4" width="20.2" height="20.2" fill="#fdfdfd"/>
<rect x="636.0" y="758.4" width="23.4" height="20.2" fill="#fefefe"/>
<rect x="325.3" y="778.3" width="13.2" height="20.2" fill="#f2f2f2"/>
<rect x="338.2" y="778.3" width="20.2" height="20.2" fill="#efefee"/>
<rect x="358.1" y="778.3" width="20.2" height="20.2" fill="#e9e9e7"/>
<rect x="377.9" y="778.3" width="20.2" height="20.2" fill="#e5e4e2"/>
<rect x="397.8" y="778.3" width="40.0" height="20.2" fill="#e3e2df"/>
<rect x="437.5" y="778.3" width="20.2" height="20.2" fill="#e5e4e2"/>
<rect x="457.3" y="778.3" width="20.2" height="20.2" fill="#e7e7e5"/>
<rect x="477.2" y="778.3" width="20.2" height="20.2" fill="#e9e9e8"/>
<rect x="497.0" y="778.3" width="20.1" height="20.2" fill="#eceeee"/>
<rect x="516.9" y="778.3" width="20.2" height="20.2" fill="#f0f2f2"/>
<rect x="536.7" y="778.3" width="20.2" height="20.2" fill="#f5f6f6"/>
<rect x="556.6" y="778.3" width="20.2" height="20.2" fill="#f7f8f7"/>
<rect x="576.4" y="778.3" width="20.2" height="20.2" fill="#f9faf9"/>
<rect x="596.3" y="778.3" width="20.2" height="20.2" fill="#fbfbfb"/>
<rect x="616.1" y="778.3" width="20.2" height="20.2" fill="#fcfcfc"/>
<rect x="636.0" y="778.3" width="23.4" height="20.2" fill="#fdfdfd"/>
<rect x="325.3" y="798.2" width="13.2" height="20.2" fill="#f3f3f3"/>
<rect x="338.2" y="798.2" width="20.2" height="20.2" fill="#f0f0f0"/>
<rect x="358.1" y="798.2" width="20.2" height="20.2" fill="#ebebea"/>
<rect x="377.9" y="798.2" width="20.2" height="20.2" fill="#e7e6e4"/>
<rect x="397.8" y="798.2" width="40.0" height="20.2" fill="#e5e4e1"/>
<rect x="437.5" y="798.2" width="20.2" height="20.2" fill="#e6e5e3"/>
<rect x="457.3" y="798.2" width="20.2" height="20.2" fill="#e8e8e6"/>
<rect x="477.2" y="798.2" width="20.2" height="20.2" fill="#eaeae9"/>
<rect x="497.0" y="798.2" width="20.1" height="20.2" fill="#ecedec"/>
<rect x="516.9" y="798.2" width="20.2" height="20.2" fill="#f0f1f1"/>
<rect x="536.7" y="798.2" width="20.2" height="20.2" fill="#f4f5f5"/>
<rect x="556.6" y="798.2" width="20.2" height="20.2" fill="#f6f7f6"/>
<rect x="576.4" y="798.2" width="20.2" height="20.2" fill="#f8f9f8"/>
<rect x="596.3" y="798.2" width="20.2" height="20.2" fill="#fafafa"/>
<rect x="616.1" y="798.2" width="20.2" height="20.2" fill="#fbfbfb"/>
<rect x="636.0" y="798.2" width="23.4" height="20.2" fill="#fcfcfc"/>
<rect x="325.3" y="818.1" width="13.2" height="18.6" fill="#f4f4f4"/>
<rect x="338.2" y="818.1" width="20.2" height="18.6" fill="#f2f2f2"/>
<rect x="358.1" y="818.1" width="20.2" height="18.6" fill="#eeeeed"/>
<rect x="377.9" y="818.1" width="20.2" height="18.6" fill="#ebebe9"/>
<rect x="397.8" y="818.1" width="20.2" height="18.6" fill="#e9e8e6"/>
<rect x="417.6" y="818.1" width="20.2" height="18.6" fill="#e9e8e7"/>
<rect x="437.5" y="818.1" width="20.2" height="18.6" fill="#eaeae8"/>
<rect x="457.3" y="818.1" width="20.2" height="18.6" fill="#ececeb"/>
<rect x="477.2" y="818.1" width="20.2" height="18.6" fill="#eeeeed"/>
<rect x="497.0" y="818.1" width="20.1" height="18.6" fill="#f0f0f0"/>
<rect x="516.9" y="818.1" width="20.2" height="18.6" fill="#f3f4f3"/>
<rect x="536.7" y="818.1" width="20.2" height="18.6" fill="#f5f6f5"/>
<rect x="556.6" y="818.1" width="20.2" height="18.6" fill="#f7f7f7"/>
<rect x="576.4" y="818.1" width="20.2" height="18.6" fill="#f8f9f8"/>
<rect x="596.3" y="818.1" width="20.2" height="18.6" fill="#fafafa"/>
<rect x="616.1" y="818.1" width="20.2" height="18.6" fill="#fbfbfb"/>
<rect x="636.0" y="818.1" width="23.4" height="18.6" fill="#fcfcfc"/>
</svg>
<div class="a" style="left:433px;top:341px;width:6px;height:4px;background:#f0f0ee"></div>
<div class="a" style="left:1317.7px;top:340.5px;width:159.6px;height:497px;background:radial-gradient(ellipse 75px 45px at 100px 135px,rgba(241,241,242,.95),rgba(248,248,249,0) 100%),radial-gradient(ellipse 80px 28px at 90px 490px,rgba(240,240,242,.95),rgba(248,248,249,0) 100%),radial-gradient(ellipse 110px 110px at 0px 20px,rgba(236,237,241,1),rgba(250,250,251,0) 100%),linear-gradient(180deg,#ffffff 0,#fefefe 14%,#fafafb 22%,#fafafb 38%,#fcfcfd 45%,#fcfcfc 85%,#f8f8f9 100%)"></div>
<svg style="left:0;top:0" width="1908" height="920" fill="none" stroke-linecap="round" stroke-linejoin="round">
<path d="M567.3,110.3H585M576.2,101.5V119.2" stroke="#3d4257" stroke-width="1.6" stroke-linecap="butt"/>
<polyline points="1770.7,107.6 1777.0,114.0 1783.3,107.6" stroke="#9a9dad" stroke-width="1.2"/>
<line x1="1822" y1="105.8" x2="1834.8" y2="105.8" stroke="#3d4257" stroke-width="1.4" stroke-linecap="butt"/>
<rect x="1817" y="104.89999999999999" width="1.9" height="1.9" fill="#3d4257" stroke="none"/>
<line x1="1822" y1="111.4" x2="1834.8" y2="111.4" stroke="#3d4257" stroke-width="1.4" stroke-linecap="butt"/>
<rect x="1817" y="110.5" width="1.9" height="1.9" fill="#3d4257" stroke="none"/>
<line x1="1822" y1="117" x2="1834.8" y2="117" stroke="#3d4257" stroke-width="1.4" stroke-linecap="butt"/>
<rect x="1817" y="116.1" width="1.9" height="1.9" fill="#3d4257" stroke="none"/>
<path d="M1858,104.6 L1863.7,102.7 L1869.4,104.6 L1875,102.7 V117.6 L1869.4,119.5 L1863.7,117.6 L1858,119.5 Z M1863.7,102.7 V117.6 M1869.4,104.6 V119.5" stroke="#8d91a3" stroke-width="1.4" stroke-linejoin="miter"/>
<polyline points="1847.5,179.5 1853.0,185.1 1858.5,179.5" stroke="#9a9dad" stroke-width="1.2"/>
<circle cx="301.3" cy="258.8" r="6" stroke="#bfc0c6" stroke-width="1.4"/><line x1="305.7" y1="263.3" x2="310" y2="267.8" stroke="#bfc0c6" stroke-width="1.4"/>
<polyline points="741.4,256.9 747.6,263.1 753.9,256.9" stroke="#9a9dad" stroke-width="1.2"/>
<polyline points="910.0,256.9 916.2,263.1 922.5,256.9" stroke="#9a9dad" stroke-width="1.2"/>
<polyline points="1063.0,256.9 1069.3,263.1 1075.5,256.9" stroke="#9a9dad" stroke-width="1.2"/>
<polyline points="1254.2,256.9 1260.5,263.1 1266.8,256.9" stroke="#9a9dad" stroke-width="1.2"/>
<path d="M1693,251.5 H1710.3 L1703.8,259.8 V268.2 L1699.5,265.4 V259.8 Z" stroke="#4a4f63" stroke-width="1.3"/>
<path d="M1850.5,251.5 H1864.5 L1867.3,254.3 V268.2 H1850.5 Z M1854.3,251.5 V257 H1862.8 V251.5" stroke="#c9cbd4" stroke-width="1.3" stroke-linejoin="miter"/>
<polygon points="792.6,306.9 797,302.7 801.4,306.9" fill="#d9dae1" stroke="none"/><polygon points="792.6,315.7 797,319.9 801.4,315.7" fill="#d9dae1" stroke="none"/>
<polygon points="1016.6,306.9 1021,302.7 1025.4,306.9" fill="#d9dae1" stroke="none"/><polygon points="1016.6,315.7 1021,319.9 1025.4,315.7" fill="#d9dae1" stroke="none"/>
<polygon points="1145.6,306.9 1150,302.7 1154.4,306.9" fill="#d9dae1" stroke="none"/><polygon points="1145.6,315.7 1150,319.9 1154.4,315.7" fill="#d9dae1" stroke="none"/>
<path d="M1727.6,387.5 L1744.6,380.0 L1737.1,397.0 L1734.2,390.7 Z M1734.2,390.7 L1744.6,380.0" stroke="#858999" stroke-width="1.3"/>
<path d="M1773.9,383.6 H1767.9 V397.0 H1783.9 V388.5" stroke="#858999" stroke-width="1.3" stroke-linecap="butt" stroke-linejoin="miter"/><path d="M1772.3,391.6 C1773.8,386.7 1778.2,383.5 1784.6,383.1" stroke="#858999" stroke-width="1.3"/><polyline points="1781.4,380.3 1785.0,383.1 1782.0,386.1" stroke="#858999" stroke-width="1.3"/>
<circle cx="1809.5" cy="388.9" r="1.6" fill="#6b6f80" stroke="none"/><circle cx="1817.0" cy="388.9" r="1.6" fill="#6b6f80" stroke="none"/><circle cx="1824.3" cy="388.9" r="1.6" fill="#6b6f80" stroke="none"/>
<path d="M1727.6,491.9 L1744.6,484.4 L1737.1,501.4 L1734.2,495.1 Z M1734.2,495.1 L1744.6,484.4" stroke="#858999" stroke-width="1.3"/>
<path d="M1773.9,488.0 H1767.9 V501.4 H1783.9 V492.9" stroke="#858999" stroke-width="1.3" stroke-linecap="butt" stroke-linejoin="miter"/><path d="M1772.3,496.0 C1773.8,491.1 1778.2,487.9 1784.6,487.5" stroke="#858999" stroke-width="1.3"/><polyline points="1781.4,484.7 1785.0,487.5 1782.0,490.5" stroke="#858999" stroke-width="1.3"/>
<circle cx="1809.5" cy="493.3" r="1.6" fill="#6b6f80" stroke="none"/><circle cx="1817.0" cy="493.3" r="1.6" fill="#6b6f80" stroke="none"/><circle cx="1824.3" cy="493.3" r="1.6" fill="#6b6f80" stroke="none"/>
<path d="M1727.6,596.4 L1744.6,588.9 L1737.1,605.9 L1734.2,599.6 Z M1734.2,599.6 L1744.6,588.9" stroke="#858999" stroke-width="1.3"/>
<path d="M1773.9,592.5 H1767.9 V605.9 H1783.9 V597.4" stroke="#858999" stroke-width="1.3" stroke-linecap="butt" stroke-linejoin="miter"/><path d="M1772.3,600.5 C1773.8,595.6 1778.2,592.4 1784.6,592.0" stroke="#858999" stroke-width="1.3"/><polyline points="1781.4,589.2 1785.0,592.0 1782.0,595.0" stroke="#858999" stroke-width="1.3"/>
<circle cx="1809.5" cy="597.8" r="1.6" fill="#6b6f80" stroke="none"/><circle cx="1817.0" cy="597.8" r="1.6" fill="#6b6f80" stroke="none"/><circle cx="1824.3" cy="597.8" r="1.6" fill="#6b6f80" stroke="none"/>
<path d="M1727.6,700.8 L1744.6,693.3 L1737.1,710.3 L1734.2,704.0 Z M1734.2,704.0 L1744.6,693.3" stroke="#858999" stroke-width="1.3"/>
<path d="M1773.9,696.9 H1767.9 V710.3 H1783.9 V701.8" stroke="#858999" stroke-width="1.3" stroke-linecap="butt" stroke-linejoin="miter"/><path d="M1772.3,704.9 C1773.8,700.0 1778.2,696.8 1784.6,696.4" stroke="#858999" stroke-width="1.3"/><polyline points="1781.4,693.6 1785.0,696.4 1782.0,699.4" stroke="#858999" stroke-width="1.3"/>
<circle cx="1809.5" cy="702.2" r="1.6" fill="#6b6f80" stroke="none"/><circle cx="1817.0" cy="702.2" r="1.6" fill="#6b6f80" stroke="none"/><circle cx="1824.3" cy="702.2" r="1.6" fill="#6b6f80" stroke="none"/>
<path d="M1727.6,805.3 L1744.6,797.8 L1737.1,814.8 L1734.2,808.5 Z M1734.2,808.5 L1744.6,797.8" stroke="#858999" stroke-width="1.3"/>
<path d="M1773.9,801.4 H1767.9 V814.8 H1783.9 V806.3" stroke="#858999" stroke-width="1.3" stroke-linecap="butt" stroke-linejoin="miter"/><path d="M1772.3,809.4 C1773.8,804.5 1778.2,801.3 1784.6,800.9" stroke="#858999" stroke-width="1.3"/><polyline points="1781.4,798.1 1785.0,800.9 1782.0,803.9" stroke="#858999" stroke-width="1.3"/>
<circle cx="1809.5" cy="806.7" r="1.6" fill="#6b6f80" stroke="none"/><circle cx="1817.0" cy="806.7" r="1.6" fill="#6b6f80" stroke="none"/><circle cx="1824.3" cy="806.7" r="1.6" fill="#6b6f80" stroke="none"/>
<circle cx="1290.6" cy="386.7" r="22.5" fill="#c4c6d2" stroke="none"/>
<circle cx="1290.6" cy="382.5" r="8.3" fill="#e6e7ed" stroke="none"/>
<path d="M1273.6,401.3 Q1290.6,388.7 1307.6,401.3 A22.5,22.5 0 0 1 1273.6,401.3 Z" fill="#e6e7ed" stroke="none"/>
<circle cx="1290.6" cy="491.1" r="22.5" fill="#c4c6d2" stroke="none"/>
<circle cx="1290.6" cy="486.9" r="8.3" fill="#e6e7ed" stroke="none"/>
<path d="M1273.6,505.7 Q1290.6,493.1 1307.6,505.7 A22.5,22.5 0 0 1 1273.6,505.7 Z" fill="#e6e7ed" stroke="none"/>
<circle cx="1290.6" cy="595.6" r="22.5" fill="#c4c6d2" stroke="none"/>
<circle cx="1290.6" cy="591.4" r="8.3" fill="#e6e7ed" stroke="none"/>
<path d="M1273.6,610.2 Q1290.6,597.6 1307.6,610.2 A22.5,22.5 0 0 1 1273.6,610.2 Z" fill="#e6e7ed" stroke="none"/>
<circle cx="1290.6" cy="700.0" r="22.5" fill="#c4c6d2" stroke="none"/>
<circle cx="1290.6" cy="695.8" r="8.3" fill="#e6e7ed" stroke="none"/>
<path d="M1273.6,714.6 Q1290.6,702.0 1307.6,714.6 A22.5,22.5 0 0 1 1273.6,714.6 Z" fill="#e6e7ed" stroke="none"/>
<circle cx="1290.6" cy="804.5" r="22.5" fill="#c4c6d2" stroke="none"/>
<circle cx="1290.6" cy="800.3" r="8.3" fill="#e6e7ed" stroke="none"/>
<path d="M1273.6,819.1 Q1290.6,806.5 1307.6,819.1 A22.5,22.5 0 0 1 1273.6,819.1 Z" fill="#e6e7ed" stroke="none"/>
<rect x="1868.5" y="338" width="18" height="544" fill="#fbfbfc" stroke="none"/>
<rect x="271.5" y="882" width="1615" height="18.5" fill="#fafafa" stroke="none"/>
<polygon points="1871.6,357.3 1877.7,349 1883.8,357.3" fill="#8b8b8b" stroke="none"/>
<rect x="1872.3" y="367" width="10.6" height="101" rx="5.3" fill="#8b8b8b" stroke="none"/>
<polygon points="290.2,885.6 290.2,897.2 281,891.4" fill="#7d7d7d" stroke="none"/>
<polygon points="1848.5,885.6 1848.5,897.2 1857.7,891.4" fill="#7d7d7d" stroke="none"/>
<rect x="300.3" y="886" width="1145.6" height="10.8" rx="5.4" fill="#8b8b8b" stroke="none"/>
</svg>
<span class="t" style="top:22.1px;font-size:25.5px;color:#3b5bdb;font-weight:700;-webkit-text-stroke:0.5px #3b5bdb;left:63.9px;">Lofty</span>
<span class="t" style="top:22.8px;font-size:16px;color:#3f4459;-webkit-text-stroke:0.4px #3f4459;left:172.7px;transform:scaleX(1.098);">People</span>
<span class="t" style="top:22.8px;font-size:16px;color:#3f4459;-webkit-text-stroke:0.4px #3f4459;left:281.1px;transform:scaleX(1.148);">Transactions</span>
<span class="t" style="top:22.8px;font-size:16px;color:#3f4459;-webkit-text-stroke:0.4px #3f4459;left:419.8px;transform:scaleX(1.112);">Calendar</span>
<span class="t" style="top:22.8px;font-size:16px;color:#4461d2;-webkit-text-stroke:0.4px #4461d2;left:526.5px;transform:scaleX(1.165);">Listings</span>
<span class="t" style="top:22.8px;font-size:16px;color:#3f4459;-webkit-text-stroke:0.4px #3f4459;left:623.8px;transform:scaleX(1.154);">Marketing</span>
<span class="t" style="top:22.8px;font-size:16px;color:#3f4459;-webkit-text-stroke:0.4px #3f4459;left:739.4px;transform:scaleX(1.147);">Reporting</span>
<span class="t" style="top:22.8px;font-size:16px;color:#3f4459;-webkit-text-stroke:0.4px #3f4459;left:853.1px;transform:scaleX(1.135);">Website</span>
<span class="t" style="top:22.8px;font-size:16px;color:#3f4459;-webkit-text-stroke:0.4px #3f4459;left:952.9px;transform:scaleX(1.145);">Marketplace</span>
<span class="t" style="top:22.8px;font-size:16px;color:#3f4459;-webkit-text-stroke:0.4px #3f4459;left:1086.8px;transform:scaleX(1.168);">Settings</span>
<span class="t" style="top:104.4px;font-size:17px;color:#ffffff;font-weight:700;-webkit-text-stroke:0.2px #ffffff;left:22.8px;transform:scaleX(1.092);">LISTINGS</span>
<span class="t" style="top:151.1px;font-size:15px;color:#b9bcc9;-webkit-text-stroke:0.4px #b9bcc9;left:45.3px;transform:scaleX(1.122);">My Listings</span>
<span class="t" style="top:151.6px;font-size:13.5px;color:#a4a7b8;-webkit-text-stroke:0.4px #a4a7b8;right:1682.8px;transform-origin:100% 50%;transform:scaleX(1.098);">59</span>
<span class="t" style="top:196.1px;font-size:15px;color:#b9bcc9;-webkit-text-stroke:0.4px #b9bcc9;left:45.3px;transform:scaleX(1.139);">Office Listings</span>
<span class="t" style="top:196.6px;font-size:13.5px;color:#a4a7b8;-webkit-text-stroke:0.4px #a4a7b8;right:1682.8px;transform-origin:100% 50%;transform:scaleX(0.945);">12</span>
<span class="t" style="top:241.1px;font-size:15px;color:#ffffff;-webkit-text-stroke:0.4px #ffffff;left:45.3px;transform:scaleX(1.119);">All Listings</span>
<span class="t" style="top:241.6px;font-size:13.5px;color:#a4a7b8;-webkit-text-stroke:0.4px #a4a7b8;right:1682.8px;transform-origin:100% 50%;transform:scaleX(1.005);">3173</span>
<span class="t" style="top:311.4px;font-size:17px;color:#ffffff;font-weight:700;-webkit-text-stroke:0.2px #ffffff;left:23.0px;transform:scaleX(1.070);">HOT SHEETS</span>
<span class="t" style="top:358.3px;font-size:15px;color:#b9bcc9;-webkit-text-stroke:0.4px #b9bcc9;left:45.2px;transform:scaleX(1.088);">Price Reduced</span>
<span class="t" style="top:358.8px;font-size:13.5px;color:#a4a7b8;-webkit-text-stroke:0.4px #a4a7b8;right:1683.0px;transform-origin:100% 50%;transform:scaleX(1.101);">364</span>
<span class="t" style="top:403.3px;font-size:15px;color:#b9bcc9;-webkit-text-stroke:0.4px #b9bcc9;left:45.2px;transform:scaleX(1.100);">Back on Market</span>
<span class="t" style="top:403.8px;font-size:13.5px;color:#a4a7b8;-webkit-text-stroke:0.4px #a4a7b8;right:1683.0px;transform-origin:100% 50%;">3</span>
<span class="t" style="top:448.3px;font-size:15px;color:#b9bcc9;-webkit-text-stroke:0.4px #b9bcc9;left:45.2px;transform:scaleX(1.111);">New Listings</span>
<span class="t" style="top:448.8px;font-size:13.5px;color:#a4a7b8;-webkit-text-stroke:0.4px #a4a7b8;right:1683.0px;transform-origin:100% 50%;transform:scaleX(1.101);">447</span>
<span class="t" style="top:493.3px;font-size:15px;color:#b9bcc9;-webkit-text-stroke:0.4px #b9bcc9;left:45.2px;transform:scaleX(1.084);">Open House</span>
<span class="t" style="top:493.8px;font-size:13.5px;color:#a4a7b8;-webkit-text-stroke:0.4px #a4a7b8;right:1683.0px;transform-origin:100% 50%;transform:scaleX(1.101);">459</span>
<span class="t" style="top:538.3px;font-size:15px;color:#b9bcc9;-webkit-text-stroke:0.4px #b9bcc9;left:45.2px;transform:scaleX(1.127);">Multi 3X3</span>
<span class="t" style="top:538.8px;font-size:13.5px;color:#a4a7b8;-webkit-text-stroke:0.4px #a4a7b8;right:1683.0px;transform-origin:100% 50%;transform:scaleX(1.098);">85</span>
<span class="t" style="top:583.3px;font-size:15px;color:#b9bcc9;-webkit-text-stroke:0.4px #b9bcc9;left:45.2px;transform:scaleX(1.120);">4X3</span>
<span class="t" style="top:583.8px;font-size:13.5px;color:#a4a7b8;-webkit-text-stroke:0.4px #a4a7b8;right:1683.0px;transform-origin:100% 50%;transform:scaleX(1.098);">36</span>
<span class="t" style="top:628.3px;font-size:15px;color:#b9bcc9;-webkit-text-stroke:0.4px #b9bcc9;left:45.2px;transform:scaleX(1.092);">Multi Family</span>
<span class="t" style="top:628.8px;font-size:13.5px;color:#a4a7b8;-webkit-text-stroke:0.4px #a4a7b8;right:1683.0px;transform-origin:100% 50%;transform:scaleX(1.031);">81</span>
<span class="t" style="top:673.3px;font-size:15px;color:#b9bcc9;-webkit-text-stroke:0.4px #b9bcc9;left:45.2px;transform:scaleX(1.075);">Retiree Fishing H...</span>
<span class="t" style="top:673.8px;font-size:13.5px;color:#a4a7b8;-webkit-text-stroke:0.4px #a4a7b8;right:1683.0px;transform-origin:100% 50%;transform:scaleX(1.101);">294</span>
<span class="t" style="top:718.3px;font-size:15px;color:#b9bcc9;-webkit-text-stroke:0.4px #b9bcc9;left:45.2px;transform:scaleX(1.085);">Bungalows</span>
<span class="t" style="top:718.8px;font-size:13.5px;color:#a4a7b8;-webkit-text-stroke:0.4px #a4a7b8;right:1683.0px;transform-origin:100% 50%;transform:scaleX(1.043);">155</span>
<span class="t" style="top:763.3px;font-size:15px;color:#b9bcc9;-webkit-text-stroke:0.4px #b9bcc9;left:45.2px;transform:scaleX(1.067);">Young Family Ho...</span>
<span class="t" style="top:763.8px;font-size:13.5px;color:#a4a7b8;-webkit-text-stroke:0.4px #a4a7b8;right:1683.0px;transform-origin:100% 50%;">141</span>
<span class="t" style="top:808.3px;font-size:15px;color:#b9bcc9;-webkit-text-stroke:0.4px #b9bcc9;left:45.2px;transform:scaleX(1.074);">Renters</span>
<span class="t" style="top:808.8px;font-size:13.5px;color:#a4a7b8;-webkit-text-stroke:0.4px #a4a7b8;right:1683.0px;transform-origin:100% 50%;transform:scaleX(1.043);">301</span>
<span class="t" style="top:98.8px;font-size:27px;color:#1f2335;font-weight:700;-webkit-text-stroke:0.2px #1f2335;left:271.1px;transform:scaleX(1.047);">All Listings (3,173)</span>
<span class="t" style="top:98.0px;font-size:15.3px;color:#3d4257;-webkit-text-stroke:0.4px #3d4257;left:597.5px;transform:scaleX(1.077);">Add Manual Listing</span>
<span class="t" style="top:98.5px;font-size:15px;color:#1f2335;font-weight:700;-webkit-text-stroke:0.2px #1f2335;left:1541.7px;transform:scaleX(1.079);">Source:</span>
<span class="t" style="top:169.3px;font-size:14.5px;color:#1f2335;font-weight:700;-webkit-text-stroke:0.2px #1f2335;left:293.6px;transform:scaleX(1.125);">MLS Approval Status</span>
<span class="t" style="top:170.3px;font-size:13px;color:#6b7085;-webkit-text-stroke:0.4px #6b7085;left:465.1px;transform:scaleX(1.075);">(Approved</span>
<span class="t" style="top:170.3px;font-size:13px;color:#27b871;font-weight:700;-webkit-text-stroke:0.2px #27b871;left:535.0px;transform:scaleX(0.995);">3</span>
<span class="t" style="top:170.3px;font-size:13px;color:#6b7085;-webkit-text-stroke:0.4px #6b7085;left:547.4px;transform:scaleX(1.039);">Pending</span>
<span class="t" style="top:170.3px;font-size:13px;color:#e0364c;font-weight:700;-webkit-text-stroke:0.2px #e0364c;left:602.0px;transform:scaleX(0.995);">2</span>
<span class="t" style="top:170.3px;font-size:13px;color:#6b7085;-webkit-text-stroke:0.4px #6b7085;left:610.0px;transform:scaleX(1.036);">)</span>
<span class="t" style="top:169.1px;font-size:15.3px;color:#4461d2;-webkit-text-stroke:0.15px #4461d2;left:1660.8px;transform:scaleX(1.095);">Check more details &gt;</span>
<span class="t" style="top:249.1px;font-size:15px;color:#b4b7c5;-webkit-text-stroke:0.4px #b4b7c5;left:319.8px;transform:scaleX(1.105);">City, Zip Code, Subdivision, Neigh...</span>
<span class="t" style="top:247.2px;font-size:15.3px;color:#464a5c;-webkit-text-stroke:0.6px #464a5c;left:643.0px;transform:scaleX(1.075);">Time Frame</span>
<span class="t" style="top:247.2px;font-size:15.3px;color:#464a5c;-webkit-text-stroke:0.6px #464a5c;left:788.2px;transform:scaleX(1.100);">Purchase Type</span>
<span class="t" style="top:247.2px;font-size:15.3px;color:#464a5c;-webkit-text-stroke:0.6px #464a5c;left:956.5px;transform:scaleX(1.073);">Days On Site</span>
<span class="t" style="top:247.2px;font-size:15.3px;color:#464a5c;-webkit-text-stroke:0.6px #464a5c;left:1109.7px;transform:scaleX(1.108);">Associated Age...</span>
<span class="t" style="top:247.2px;font-size:15.3px;color:#464a5c;-webkit-text-stroke:0.6px #464a5c;left:1722.5px;transform:scaleX(1.126);">All Filters (0)</span>
<span class="t" style="top:299.2px;font-size:15px;color:#1f2335;font-weight:700;-webkit-text-stroke:0.2px #1f2335;left:334.5px;transform:scaleX(1.081);">Address</span>
<span class="t" style="top:299.2px;font-size:15px;color:#1f2335;font-weight:700;-webkit-text-stroke:0.2px #1f2335;left:739.5px;transform:scaleX(1.087);">Price</span>
<span class="t" style="top:299.2px;font-size:15px;color:#1f2335;font-weight:700;-webkit-text-stroke:0.2px #1f2335;left:930.6px;transform:scaleX(1.107);">Bed/Bath</span>
<span class="t" style="top:299.2px;font-size:15px;color:#1f2335;font-weight:700;-webkit-text-stroke:0.2px #1f2335;left:1099.2px;transform:scaleX(1.138);">Sqft</span>
<span class="t" style="top:299.2px;font-size:15px;color:#1f2335;font-weight:700;-webkit-text-stroke:0.2px #1f2335;left:1268.2px;transform:scaleX(1.093);">Listing Agent</span>
<span class="t" style="top:299.2px;font-size:15px;color:#1f2335;font-weight:700;-webkit-text-stroke:0.2px #1f2335;left:1560.9px;transform:scaleX(1.089);">Matched Buyers</span>
<span class="t" style="top:299.2px;font-size:15px;color:#1f2335;font-weight:700;-webkit-text-stroke:0.2px #1f2335;left:1752.1px;transform:scaleX(1.076);">Action</span>
<span class="t" style="top:377.1px;font-size:15px;color:#3d4257;font-weight:700;-webkit-text-stroke:0.2px #3d4257;left:740.0px;transform:scaleX(1.222);">$799,000</span>
<span class="t" style="top:377.6px;font-size:14px;color:#50556a;-webkit-text-stroke:0.15px #50556a;left:931.2px;transform:scaleX(1.220);">3/2.00</span>
<span class="t" style="top:377.6px;font-size:14px;color:#50556a;-webkit-text-stroke:0.15px #50556a;left:1099.5px;transform:scaleX(1.167);">1,400</span>
<span class="t" style="top:377.1px;font-size:15.3px;color:#4461d2;-webkit-text-stroke:0.25px #4461d2;left:1561.2px;transform:scaleX(1.095);">34 buyers</span>
<span class="t" style="top:481.5px;font-size:15px;color:#3d4257;font-weight:700;-webkit-text-stroke:0.2px #3d4257;left:740.0px;transform:scaleX(1.199);">$1,699,000</span>
<span class="t" style="top:482.0px;font-size:14px;color:#50556a;-webkit-text-stroke:0.15px #50556a;left:931.2px;transform:scaleX(1.220);">2/3.00</span>
<span class="t" style="top:482.0px;font-size:14px;color:#50556a;-webkit-text-stroke:0.15px #50556a;left:1099.5px;transform:scaleX(1.167);">1,586</span>
<span class="t" style="top:481.5px;font-size:15.3px;color:#4461d2;-webkit-text-stroke:0.25px #4461d2;left:1561.2px;transform:scaleX(1.084);">22 buyers</span>
<span class="t" style="top:586.0px;font-size:15px;color:#3d4257;font-weight:700;-webkit-text-stroke:0.2px #3d4257;left:740.0px;transform:scaleX(1.246);">$699,000</span>
<span class="t" style="top:586.5px;font-size:14px;color:#50556a;-webkit-text-stroke:0.15px #50556a;left:931.2px;transform:scaleX(1.099);">1/1.00</span>
<span class="t" style="top:586.5px;font-size:14px;color:#50556a;-webkit-text-stroke:0.15px #50556a;left:1099.5px;transform:scaleX(1.154);">0</span>
<span class="t" style="top:586.0px;font-size:15.3px;color:#4461d2;-webkit-text-stroke:0.25px #4461d2;left:1561.2px;transform:scaleX(1.084);">23 buyers</span>
<span class="t" style="top:690.4px;font-size:15px;color:#3d4257;font-weight:700;-webkit-text-stroke:0.2px #3d4257;left:740.0px;transform:scaleX(1.188);">$11,250,000</span>
<span class="t" style="top:690.9px;font-size:14px;color:#50556a;-webkit-text-stroke:0.15px #50556a;left:931.2px;transform:scaleX(1.176);">6/7.00</span>
<span class="t" style="top:690.9px;font-size:14px;color:#50556a;-webkit-text-stroke:0.15px #50556a;left:1099.5px;transform:scaleX(1.198);">5,475</span>
<span class="t" style="top:690.4px;font-size:15.3px;color:#4461d2;-webkit-text-stroke:0.25px #4461d2;left:1561.2px;transform:scaleX(1.084);">22 buyers</span>
<span class="t" style="top:794.9px;font-size:15px;color:#3d4257;font-weight:700;-webkit-text-stroke:0.2px #3d4257;left:740.0px;transform:scaleX(1.188);">$11,250,000</span>
<span class="t" style="top:795.4px;font-size:14px;color:#50556a;-webkit-text-stroke:0.15px #50556a;left:931.2px;transform:scaleX(1.220);">5/0.00</span>
<span class="t" style="top:795.4px;font-size:14px;color:#50556a;-webkit-text-stroke:0.15px #50556a;left:1099.5px;transform:scaleX(1.198);">5,475</span>
<span class="t" style="top:794.9px;font-size:15.3px;color:#4461d2;-webkit-text-stroke:0.25px #4461d2;left:1561.2px;transform:scaleX(1.035);">1 buyer</span>
<svg style="left:0;top:0" width="1908" height="920" fill="none">
<rect x="1866.6" y="383.2" width="1.2" height="1.8" fill="#8a8d9a"/>
<rect x="1866.6" y="387.8" width="1.2" height="1.8" fill="#8a8d9a"/>
<rect x="1866.6" y="393.2" width="1.2" height="1.8" fill="#8a8d9a"/>
<rect x="1866.6" y="488.2" width="1.2" height="1.8" fill="#8a8d9a"/>
<rect x="1866.6" y="592.2" width="1.2" height="1.8" fill="#8a8d9a"/>
<rect x="1866.6" y="600.2" width="1.2" height="1.8" fill="#8a8d9a"/>
<rect x="1712.8" y="363.2" width="47.4" height="52.8" stroke="#a90fc9" stroke-width="4.4"/>
<line x1="1581" y1="454" x2="1678" y2="407" stroke="#a90fc9" stroke-width="4"/>
<polygon points="1702.2,395.2 1669.8,396.4 1681.4,419.4" fill="#a90fc9"/>
<defs><filter id="sh" x="-50%" y="-20%" width="200%" height="140%"><feGaussianBlur stdDeviation="7"/></filter></defs>
<path d="M1862,692 h50 v186 h-50 z" fill="#6a7de0" opacity=".55" filter="url(#sh)"/>
<path d="M1908,684 C1902,684 1903,680 1896,680 H1876 A15,15 0 0 0 1861,695 V864 A18,18 0 0 0 1879,882 H1896 C1903,882 1902,885 1908,887 Z" fill="#4360df"/>
<line x1="1873" y1="745" x2="1897" y2="745" stroke="#7288ea" stroke-width="1"/>
<line x1="1873" y1="811" x2="1897" y2="811" stroke="#7288ea" stroke-width="1"/>
<circle cx="1886.5" cy="715.5" r="12" stroke="#fff" stroke-width="1"/>
<circle cx="1886.5" cy="715.5" r="9.6" fill="#fff"/>
<path d="M1884.5,709.5 q0.8,5 5,6 q-4.2,1 -5,6 q-0.8,-5 -5,-6 q4.2,-1 5,-6z" fill="#4360df"/>
<path d="M1891,709 q0.4,2.2 2.4,2.6 q-2,0.4 -2.4,2.6 q-0.4,-2.2 -2.4,-2.6 q2,-0.4 2.4,-2.6z" fill="#4360df"/>
<path d="M1891,717 q0.4,2.2 2.4,2.6 q-2,0.4 -2.4,2.6 q-0.4,-2.2 -2.4,-2.6 q2,-0.4 2.4,-2.6z" fill="#4360df"/>
<path d="M1876.5,765.5 c-1.5,1.5 -1.8,3.2 -0.8,5.2 c2.6,5.4 7,10.4 13,13.6 c2.2,1.2 4.4,1 5.8,-0.4 l1.6,-1.6 c0.8,-0.8 0.8,-1.8 0,-2.6 l-3.2,-2.8 c-0.8,-0.7 -1.8,-0.7 -2.6,0 l-1.6,1.4 c-3,-1.8 -5.2,-4.4 -6.8,-7.6 l1.4,-1.6 c0.7,-0.8 0.7,-1.8 0,-2.6 l-2.6,-3 c-0.8,-0.8 -1.8,-0.8 -2.6,0 z" fill="#fff"/>
<path d="M1886.5,831 c6.5,0 11.5,3.8 11.5,8.6 c0,4.8 -5,8.6 -11.5,8.6 c-1.2,0 -2.4,-0.1 -3.5,-0.4 l-4.6,3.2 l0.6,-4.8 c-2.5,-1.6 -4,-3.9 -4,-6.6 c0,-4.8 5,-8.6 11.5,-8.6z" fill="#fff"/>
<circle cx="1881.9" cy="839.6" r="1.3" fill="#4360df"/>
<circle cx="1886.5" cy="839.6" r="1.3" fill="#4360df"/>
<circle cx="1891.1" cy="839.6" r="1.3" fill="#4360df"/>
<circle cx="1860.5" cy="713.5" r="5.6" fill="#fff"/><circle cx="1860.5" cy="713.5" r="4.5" fill="#e8344b"/>
<circle cx="1860.5" cy="846" r="5.6" fill="#fff"/><circle cx="1860.5" cy="846" r="4.5" fill="#e8344b"/>
</svg>
</body></html>
